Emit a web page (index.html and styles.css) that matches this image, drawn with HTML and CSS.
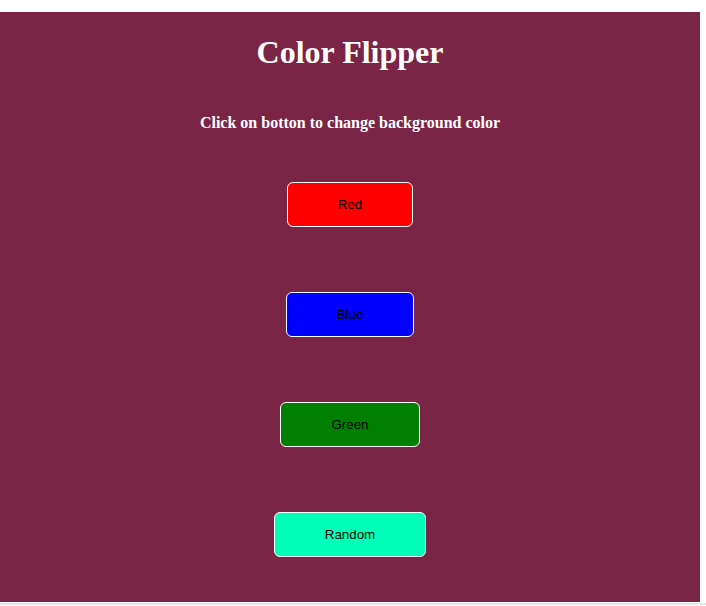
FILE: index.html
```html
<!DOCTYPE html>
<html lang="en">
<head>
<meta charset="utf-8">
<title>Color Flipper</title>
<link rel="stylesheet" href="styles.css">
</head>
<body>
  <main class="box">
    <h1 class="title">Color Flipper</h1>
    <h4 class="subtitle">Click on botton to change background color</h4>
    <div class="buttons">
      <button class="btn btn-red">Red</button>
      <button class="btn btn-blue">Blue</button>
      <button class="btn btn-green">Green</button>
      <button class="btn btn-random">Random</button>
    </div>
  </main>
  <div class="bar"></div>
</body>
</html>
```
FILE: styles.css
```css
html, body {
  margin: 0;
  padding: 0;
  background: #ffffff;
}
body {
  padding-top: 12px;
  font-family: "Liberation Serif", "Times New Roman", serif;
}
.box {
  width: 700px;
  height: 590px;
  background: #7a2446;
  display: flex;
  flex-direction: column;
  align-items: center;
  color: #ffffff;
}
.title {
  margin: 22px 0 0;
  font-size: 32px;
  line-height: 37px;
  font-weight: bold;
}
.subtitle {
  margin: 43px 0 0;
  font-size: 16px;
  line-height: 18px;
  font-weight: bold;
}
.buttons {
  margin-top: 50px;
  display: flex;
  flex-direction: column;
  align-items: center;
  gap: 65px;
}
.btn {
  font-family: "Liberation Sans", Arial, sans-serif;
  font-size: 13.33px;
  line-height: 15px;
  color: #000000;
  padding: 14px 50px;
  border: 1px solid #ffffff;
  border-radius: 6px;
  cursor: pointer;
}
.btn-red { background: #ff0000; }
.btn-blue { background: #0000ff; }
.btn-green { background: #008000; }
.btn-random { background: #00ffb7; }
.bar {
  margin-top: 1px;
  height: 2px;
  background: #e4e4e4;
}
```
